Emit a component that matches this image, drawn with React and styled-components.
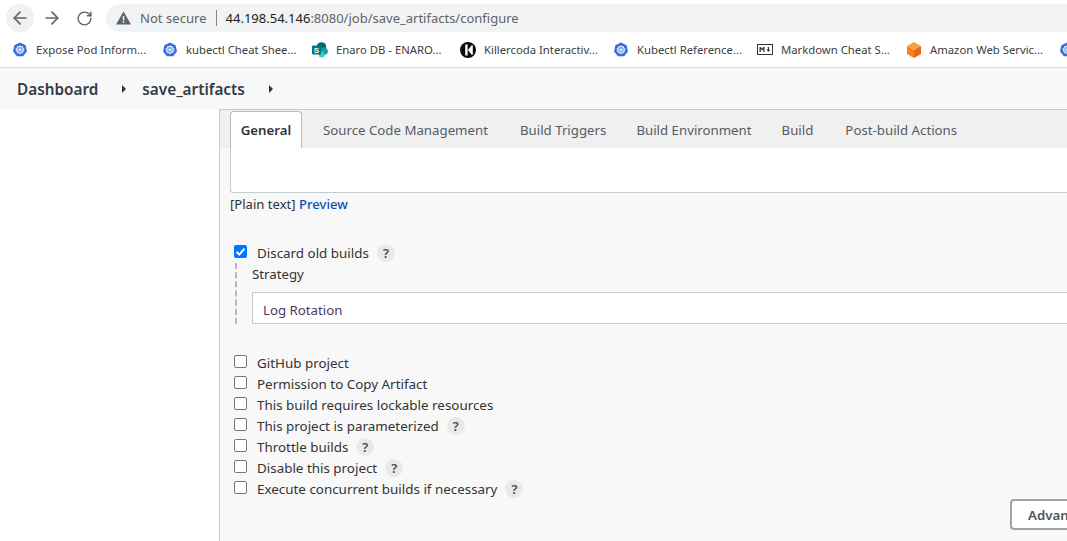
import React from 'react';
import styled, { createGlobalStyle } from 'styled-components';
import { ArrowLeft, ArrowRight, RotateCw } from 'lucide-react';

const Global = createGlobalStyle`
  html, body {
    margin: 0;
    padding: 0;
    overflow: hidden;
    background: #fff;
    font-family: "Noto Sans", "Open Sans", sans-serif;
  }
`;

const Page = styled.div`
  width: 1067px;
  height: 541px;
  overflow: hidden;
  display: flex;
  flex-direction: column;
`;

const Toolbar = styled.div`
  height: 32px;
  flex: none;
  display: flex;
  align-items: flex-start;
  padding: 4px 0 0 6px;
  box-sizing: border-box;
`;

const NavButton = styled.div`
  width: 28px;
  height: 28px;
  flex: none;
  margin-right: ${(p) => p.$gap}px;
  border-radius: 50%;
  background: ${(p) => (p.$active ? '#f1f1f2' : 'transparent')};
  color: #5f6368;
  display: flex;
  align-items: center;
  justify-content: center;
`;

const AddressBar = styled.div`
  flex: 1;
  height: 28px;
  margin-left: 4px;
  padding-left: 10px;
  border-radius: 14px 0 0 14px;
  background: #f1f3f4;
  display: flex;
  align-items: center;
  font-size: 13px;
  white-space: nowrap;
`;

const NotSecure = styled.span`
  margin-left: 9px;
  font-size: 13.1px;
  color: #5f6368;
`;

const Divider = styled.span`
  width: 1px;
  height: 16px;
  margin: 0 9px 0 9px;
  background: #80868b;
`;

const Host = styled.span`
  color: #202124;
`;

const UrlRest = styled.span`
  color: #5f6368;
`;

const Bookmarks = styled.div`
  height: 36px;
  flex: none;
  padding-left: 12px;
  box-sizing: border-box;
  border-bottom: 1px solid #dadce0;
  display: flex;
  align-items: center;
  overflow: hidden;
`;

const Bookmark = styled.div`
  width: ${(p) => p.$width}px;
  flex: none;
  display: flex;
  align-items: center;
  gap: 8px;
  font-size: 11.3px;
  color: #3c4043;
  white-space: nowrap;
`;

const IconSlot = styled.span`
  width: 16px;
  height: 16px;
  flex: none;
  display: flex;
  align-items: center;
  justify-content: center;
`;

const Breadcrumbs = styled.div`
  height: 41px;
  flex: none;
  padding-left: 17px;
  box-sizing: border-box;
  background: #f8f8f8;
  display: flex;
  align-items: center;
  font-size: 15.3px;
  font-weight: 600;
  color: #333b45;
`;

const Crumb = styled.span`
  white-space: nowrap;
`;

const CrumbArrow = styled.span`
  width: 0;
  height: 0;
  margin: 1px ${(p) => p.$right}px 0 ${(p) => p.$left}px;
  border-left: 4px solid #333;
  border-top: 4px solid transparent;
  border-bottom: 4px solid transparent;
`;

const Body = styled.div`
  flex: 1;
  display: flex;
  min-height: 0;
`;

const Sidebar = styled.div`
  width: 219px;
  flex: none;
  background: #fff;
  border-right: 1px solid #c3ccd1;
`;

const Main = styled.div`
  flex: 1;
  min-width: 0;
  padding-left: 10px;
  background: #f8f8f8;
  display: flex;
  flex-direction: column;
  font-size: 13.25px;
  color: #333;
`;

const TabBar = styled.div`
  height: 39px;
  flex: none;
  margin-left: -10px;
  padding: 1px 0 0 10px;
  box-sizing: border-box;
  background: #f0f0f0;
  border-top: 1px solid #c3ccd1;
  display: flex;
  align-items: stretch;
`;

const ActiveTab = styled.div`
  width: 72px;
  flex: none;
  box-sizing: border-box;
  background: #fff;
  border: 1px solid #b4bcc2;
  border-bottom: none;
  border-radius: 4px 4px 0 0;
  display: flex;
  align-items: center;
  justify-content: center;
  font-weight: 600;
  color: #333;
`;

const Tab = styled.div`
  margin-left: ${(p) => p.$left}px;
  flex: none;
  display: flex;
  align-items: center;
  padding-top: 1px;
  color: #555c63;
  white-space: nowrap;
`;

const DescriptionBox = styled.div`
  height: 45px;
  flex: none;
  box-sizing: border-box;
  background: #fff;
  border: 1px solid #c3ccd1;
  border-top: none;
  border-right: none;
  border-radius: 0 0 0 3px;
`;

const PreviewLine = styled.div`
  margin-top: 2px;
  height: 19px;
  line-height: 19px;
  font-size: 13.1px;
`;

const PreviewLink = styled.a`
  color: #0b4fb3;
  font-weight: 500;
`;

const Row = styled.div`
  height: 21px;
  flex: none;
  padding-left: 4px;
  display: flex;
  align-items: center;
  font-size: 13.4px;
  white-space: nowrap;
`;

const Check = styled.span`
  width: 13px;
  height: 13px;
  flex: none;
  margin: -2px 10px 0 0;
  box-sizing: border-box;
  border-radius: 2px;
  border: ${(p) => (p.$on ? 'none' : '1px solid #767676')};
  background: ${(p) => (p.$on ? '#0075ff' : '#fff')};
  display: flex;
  align-items: center;
  justify-content: center;
`;

const Help = styled.span`
  width: 18px;
  height: 18px;
  flex: none;
  margin-left: 8px;
  border-radius: 50%;
  background: #e9e9e9;
  color: #4a4a4a;
  font-size: 13px;
  font-weight: 600;
  display: flex;
  align-items: center;
  justify-content: center;
`;

const DiscardRow = styled(Row)`
  margin-top: 28px;
`;

const Nested = styled.div`
  margin: 0 0 0 5px;
  padding: 1px 0 0 15px;
  height: 60px;
  flex: none;
  border-left: 2px dashed #b8b8b8;
`;

const StrategyLabel = styled.div`
  height: 20px;
  line-height: 20px;
`;

const Select = styled.div`
  height: 32px;
  margin-top: 8px;
  padding: 3px 0 0 10px;
  box-sizing: border-box;
  background: #fff;
  border: 1px solid #c3ccd1;
  border-right: none;
  display: flex;
  align-items: center;
  color: #4a3a63;
`;

const Options = styled.div`
  margin-top: 28px;
  display: flex;
  flex-direction: column;
`;

const Footer = styled.div`
  display: flex;
  justify-content: flex-end;
`;

const AdvancedButton = styled.div`
  width: 57px;
  height: 31px;
  box-sizing: border-box;
  padding-left: 16px;
  background: #fff;
  border: 2px solid #9aa5ae;
  border-right: none;
  border-radius: 4px 0 0 4px;
  display: flex;
  align-items: center;
  overflow: hidden;
  font-weight: 600;
  color: #4d545d;
  white-space: nowrap;
`;

const KubeIcon = () => (
  <svg width="16" height="16" viewBox="0 0 16 16">
    <path d="M8 .6l5.6 2.7L15 9.4l-3.9 4.9H4.9L1 9.4l1.4-6.1z" fill="#326ce5" />
    <circle cx="8" cy="7.8" r="3.4" fill="none" stroke="#fff" strokeWidth="1" />
    <path d="M8 3v9.6M3.4 6.4l9.2 2.8M12.6 6.4L3.4 9.2M5 11.6l6-7.6M11 11.6L5 4" stroke="#fff" strokeWidth=".6" />
  </svg>
);

const SharePointIcon = () => (
  <svg width="16" height="16" viewBox="0 0 16 16">
    <circle cx="9.5" cy="5" r="4.8" fill="#036c70" />
    <circle cx="12" cy="9.2" r="3.8" fill="#1a9ba1" />
    <circle cx="9.6" cy="12.6" r="3" fill="#37c6d0" />
    <rect x="0" y="3.5" width="9" height="9" rx="1" fill="#03787c" />
    <text x="4.5" y="11" fontSize="8" fontWeight="700" fill="#fff" textAnchor="middle" fontFamily="Liberation Sans">S</text>
  </svg>
);

const KillercodaIcon = () => (
  <svg width="16" height="16" viewBox="0 0 16 16">
    <circle cx="8" cy="8" r="8" fill="#0b0b0b" />
    <path d="M5.2 2.5h2.4v11H5.2zM8 8l3.6-4.8h1.2v9.6h-1.2z" fill="#fff" />
  </svg>
);

const MarkdownIcon = () => (
  <svg width="16" height="11" viewBox="0 0 16 11">
    <rect x=".5" y=".5" width="15" height="10" fill="#fff" stroke="#333" />
    <path d="M2.5 8V3h1.2l1.3 1.8L6.3 3h1.2v5H6.2V5L5 6.6 3.8 5v3zM10.8 3H12v2.6h1.4L11.4 8 9.4 5.6h1.4z" fill="#333" />
  </svg>
);

const CubeIcon = () => (
  <svg width="16" height="16" viewBox="0 0 16 16">
    <path d="M8 0l7 4-7 4-7-4z" fill="#f8a13f" />
    <path d="M1 4l7 4v8l-7-4z" fill="#f58220" />
    <path d="M15 4l-7 4v8l7-4z" fill="#e8671e" />
  </svg>
);

const WarningIcon = () => (
  <svg width="15" height="14" viewBox="0 0 15 14">
    <path d="M7.5 0.5L15 13.5H0z" fill="#5f6368" />
    <rect x="6.8" y="5" width="1.5" height="4.5" fill="#f1f3f4" />
    <rect x="6.8" y="10.4" width="1.5" height="1.5" fill="#f1f3f4" />
  </svg>
);

const bookmarks = [
  { label: 'Expose Pod Inform...', icon: <KubeIcon />, width: 150 },
  { label: 'kubectl Cheat Shee...', icon: <KubeIcon />, width: 150 },
  { label: 'Enaro DB - ENARO...', icon: <SharePointIcon />, width: 148 },
  { label: 'Killercoda Interactiv...', icon: <KillercodaIcon />, width: 153 },
  { label: 'Kubectl Reference...', icon: <KubeIcon />, width: 144 },
  { label: 'Markdown Cheat S...', icon: <MarkdownIcon />, width: 149 },
  { label: 'Amazon Web Servic...', icon: <CubeIcon />, width: 153 },
  { label: '', icon: <KubeIcon />, width: 16 },
];

const tabs = [
  { label: 'Source Code Management', left: 21 },
  { label: 'Build Triggers', left: 32 },
  { label: 'Build Environment', left: 30 },
  { label: 'Build', left: 30 },
  { label: 'Post-build Actions', left: 32 },
];

const options = [
  { label: 'GitHub project' },
  { label: 'Permission to Copy Artifact' },
  { label: 'This build requires lockable resources' },
  { label: 'This project is parameterized', help: true },
  { label: 'Throttle builds', help: true },
  { label: 'Disable this project', help: true },
  { label: 'Execute concurrent builds if necessary', help: true },
];

function App() {
  return (
    <Page>
      <Global />
      <Toolbar>
        <NavButton $active $gap={4}><ArrowLeft size={20} /></NavButton>
        <NavButton $gap={4}><ArrowRight size={20} /></NavButton>
        <NavButton $gap={4}><RotateCw size={17} /></NavButton>
        <AddressBar>
          <WarningIcon />
          <NotSecure>Not secure</NotSecure>
          <Divider />
          <Host>44.198.54.146</Host>
          <UrlRest>:8080/job/save_artifacts/configure</UrlRest>
        </AddressBar>
      </Toolbar>
      <Bookmarks>
        {bookmarks.map((b, i) => (
          <Bookmark key={i} $width={b.width}>
            <IconSlot>{b.icon}</IconSlot>
            {b.label}
          </Bookmark>
        ))}
      </Bookmarks>
      <Breadcrumbs>
        <Crumb>Dashboard</Crumb>
        <CrumbArrow $left={24} $right={16} />
        <Crumb>save_artifacts</Crumb>
        <CrumbArrow $left={24} $right={0} />
      </Breadcrumbs>
      <Body>
        <Sidebar />
        <Main>
          <TabBar>
            <ActiveTab>General</ActiveTab>
            {tabs.map((t) => (
              <Tab key={t.label} $left={t.left}>{t.label}</Tab>
            ))}
          </TabBar>
          <DescriptionBox />
          <PreviewLine>
            [Plain text] <PreviewLink>Preview</PreviewLink>
          </PreviewLine>
          <DiscardRow>
            <Check $on>
              <svg width="11" height="11" viewBox="0 0 11 11">
                <path d="M1.5 5.8l2.8 2.8 5.2-6" fill="none" stroke="#fff" strokeWidth="2" />
              </svg>
            </Check>
            Discard old builds
            <Help>?</Help>
          </DiscardRow>
          <Nested>
            <StrategyLabel>Strategy</StrategyLabel>
            <Select>Log Rotation</Select>
          </Nested>
          <Options>
            {options.map((o) => (
              <Row key={o.label}>
                <Check />
                {o.label}
                {o.help && <Help>?</Help>}
              </Row>
            ))}
          </Options>
          <Footer>
            <AdvancedButton>Advanced...</AdvancedButton>
          </Footer>
        </Main>
      </Body>
    </Page>
  );
}

export default App;
